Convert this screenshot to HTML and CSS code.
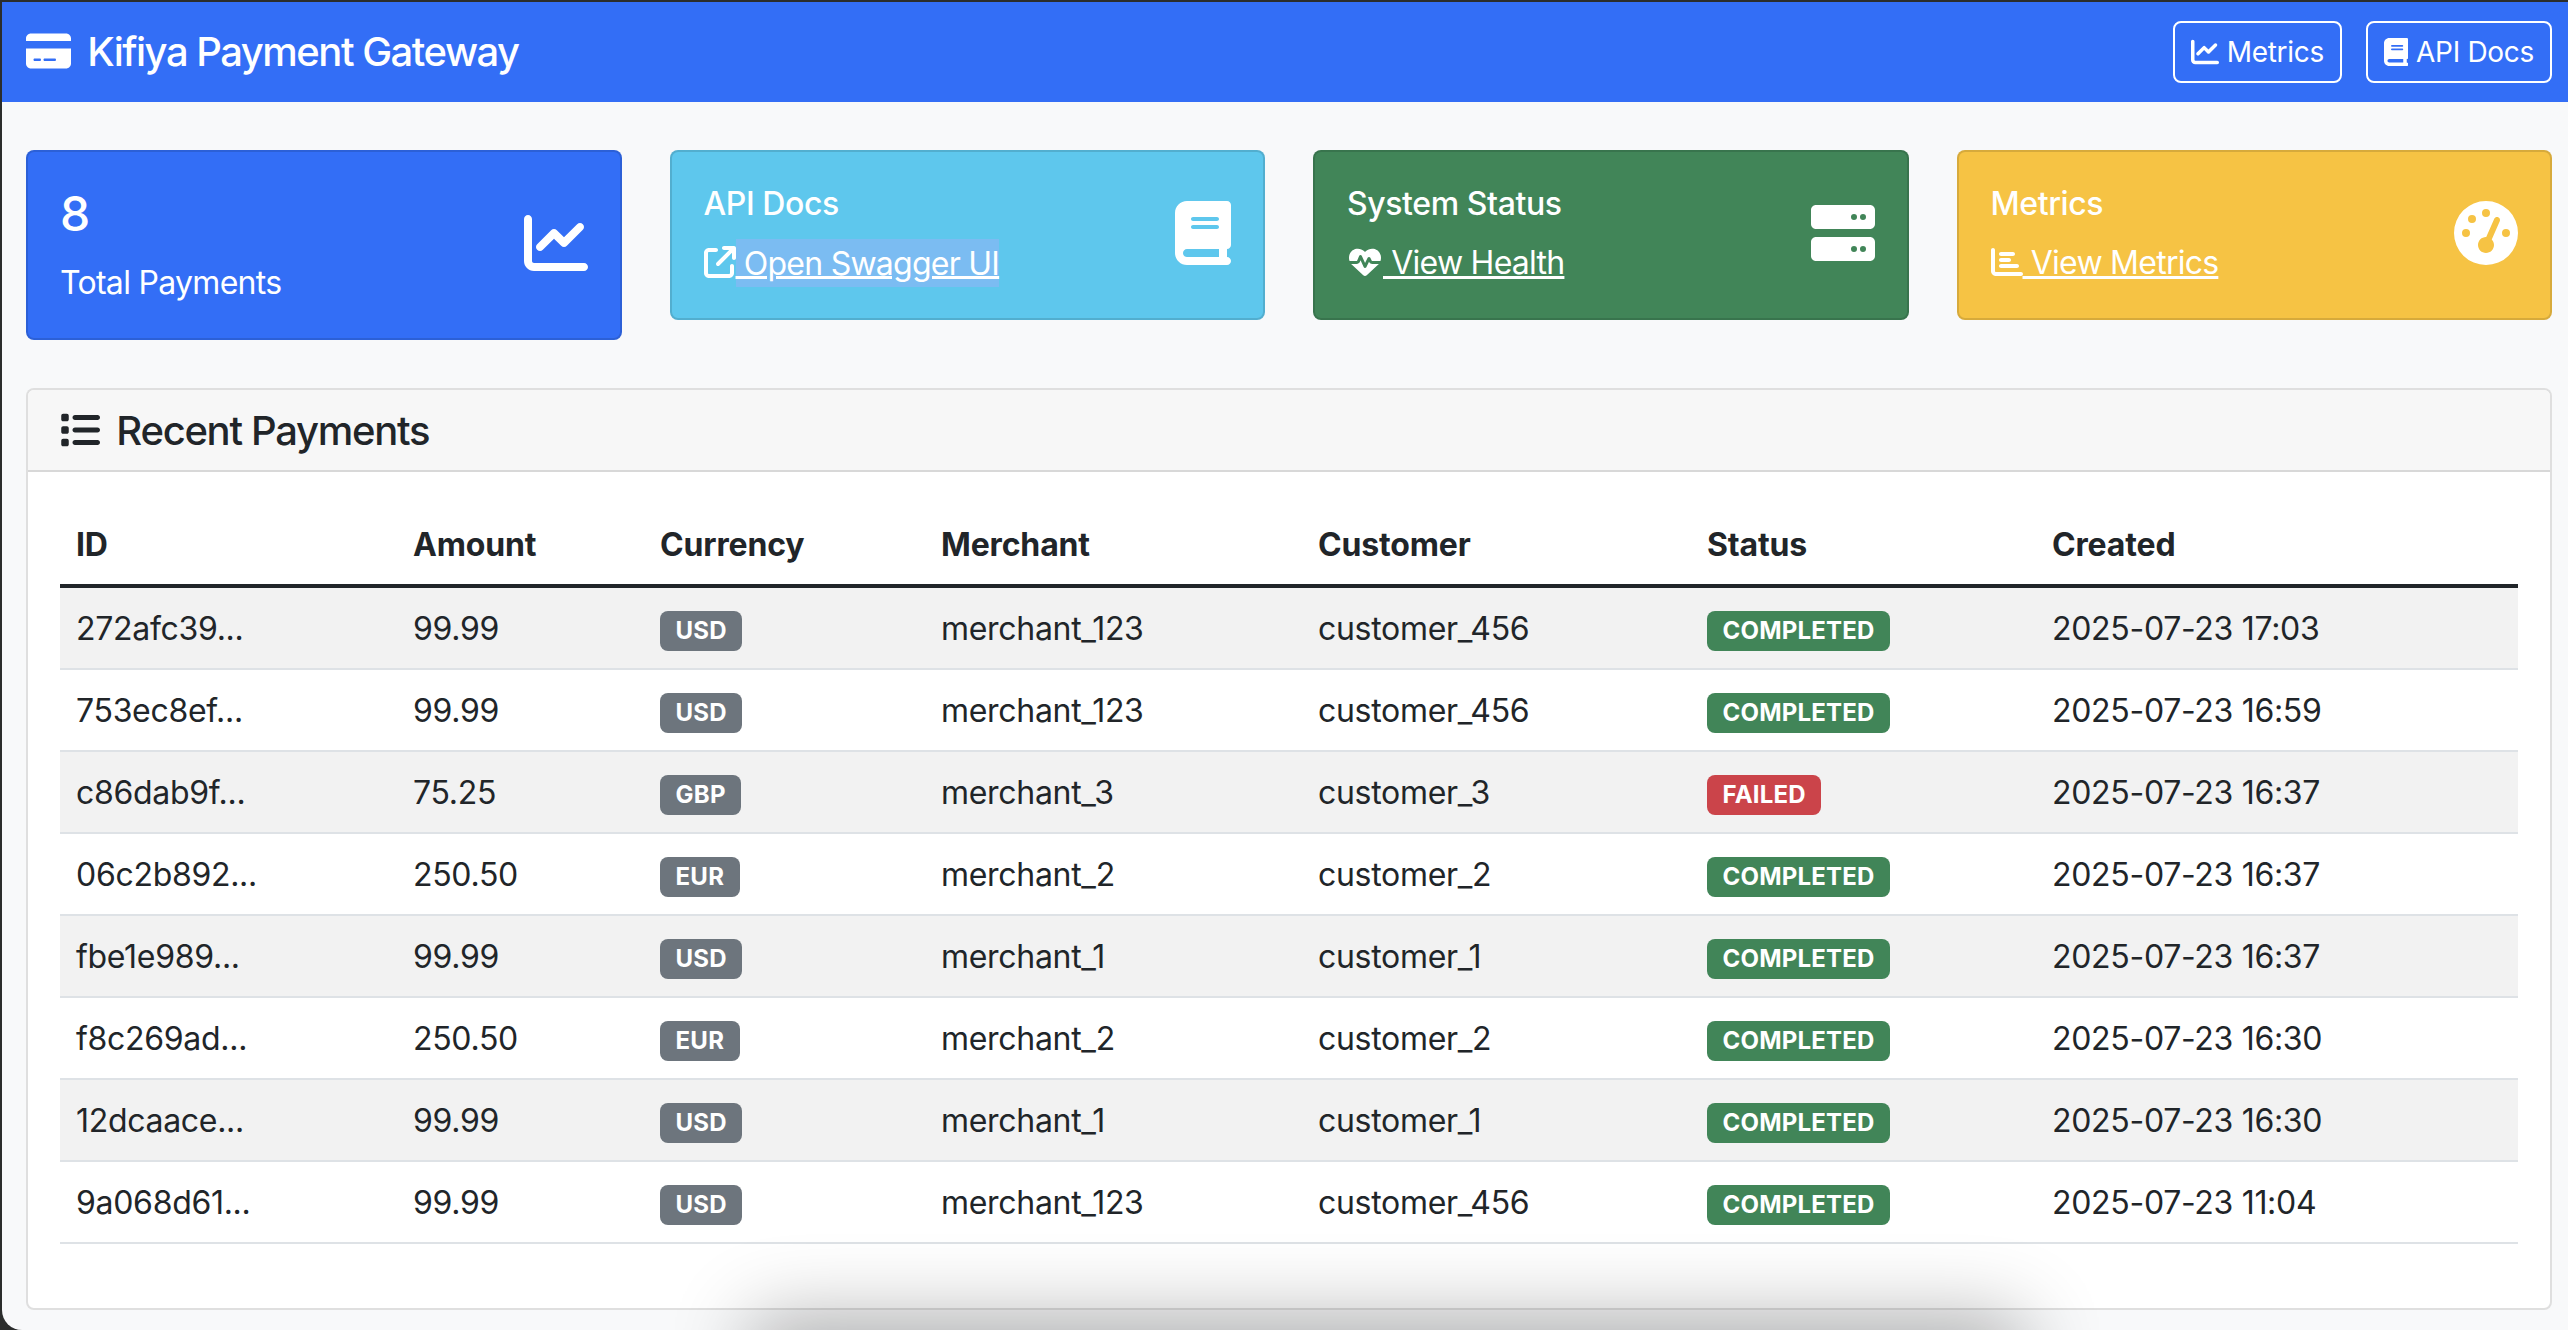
FILE: index.html
```html
<!DOCTYPE html>
<html lang="en">

<head>
	<meta charset="UTF-8">
	<title>Kifiya Payment Gateway</title>
	<link rel="stylesheet" href="styles.css">
</head>

<body>
	<div class="window">
		<nav class="navbar">
			<a class="brand" href="#">
				<svg class="icon icon-title" viewBox="0 0 576 512"><path d="M64 32C28.7 32 0 60.7 0 96v32H576V96c0-35.3-28.7-64-64-64H64zM576 224H0V416c0 35.3 28.7 64 64 64H512c35.3 0 64-28.7 64-64V224zM112 352h64c8.8 0 16 7.2 16 16s-7.2 16-16 16H112c-8.8 0-16-7.2-16-16s7.2-16 16-16zm112 16c0-8.8 7.2-16 16-16H368c8.8 0 16 7.2 16 16s-7.2 16-16 16H240c-8.8 0-16-7.2-16-16z"/></svg>
				Kifiya Payment Gateway
			</a>
			<div class="nav-buttons">
				<a class="btn" href="#">
					<svg class="icon" viewBox="0 0 512 512"><path d="M64 64c0-17.7-14.3-32-32-32S0 46.3 0 64V400c0 44.2 35.8 80 80 80H480c17.7 0 32-14.3 32-32s-14.3-32-32-32H80c-8.8 0-16-7.2-16-16V64zm406.6 86.6c12.5-12.5 12.5-32.8 0-45.3s-32.8-12.5-45.3 0L320 210.7l-57.4-57.4c-12.5-12.5-32.8-12.5-45.3 0l-112 112c-12.5 12.5-12.5 32.8 0 45.3s32.8 12.5 45.3 0L240 221.3l57.4 57.4c12.5 12.5 32.8 12.5 45.3 0l128-128z"/></svg>
					Metrics
				</a>
				<a class="btn" href="#">
					<svg class="icon" viewBox="0 0 448 512"><path d="M96 0C43 0 0 43 0 96V416c0 53 43 96 96 96H384h32c17.7 0 32-14.3 32-32s-14.3-32-32-32V384c17.7 0 32-14.3 32-32V32c0-17.7-14.3-32-32-32H384 96zm0 384H352v64H96c-17.7 0-32-14.3-32-32s14.3-32 32-32zm32-240c0-8.8 7.2-16 16-16H336c8.8 0 16 7.2 16 16s-7.2 16-16 16H144c-8.8 0-16-7.2-16-16zm16 48H336c8.8 0 16 7.2 16 16s-7.2 16-16 16H144c-8.8 0-16-7.2-16-16s7.2-16 16-16z"/></svg>
					API Docs
				</a>
			</div>
		</nav>

		<main class="content">
			<!-- summary cards -->
			<section class="summary">
				<div class="tile tile-blue">
					<div class="tile-text">
						<h4 class="tile-count">8</h4>
						<p class="tile-label">Total Payments</p>
					</div>
					<svg class="icon tile-icon" viewBox="0 0 512 512"><path d="M64 64c0-17.7-14.3-32-32-32S0 46.3 0 64V400c0 44.2 35.8 80 80 80H480c17.7 0 32-14.3 32-32s-14.3-32-32-32H80c-8.8 0-16-7.2-16-16V64zm406.6 86.6c12.5-12.5 12.5-32.8 0-45.3s-32.8-12.5-45.3 0L320 210.7l-57.4-57.4c-12.5-12.5-32.8-12.5-45.3 0l-112 112c-12.5 12.5-12.5 32.8 0 45.3s32.8 12.5 45.3 0L240 221.3l57.4 57.4c12.5 12.5 32.8 12.5 45.3 0l128-128z"/></svg>
				</div>

				<div class="tile tile-cyan">
					<div class="tile-text">
						<h6 class="tile-title">API Docs</h6>
						<a class="tile-link" href="#"><svg class="icon" viewBox="0 0 512 512"><path d="M320 0c-17.7 0-32 14.3-32 32s14.3 32 32 32h82.7L201.4 265.4c-12.5 12.5-12.5 32.8 0 45.3s32.8 12.5 45.3 0L448 109.3V192c0 17.7 14.3 32 32 32s32-14.3 32-32V32c0-17.7-14.3-32-32-32H320zM80 32C35.8 32 0 67.8 0 112V432c0 44.2 35.8 80 80 80H400c44.2 0 80-35.8 80-80V320c0-17.7-14.3-32-32-32s-32 14.3-32 32V432c0 8.8-7.2 16-16 16H80c-8.8 0-16-7.2-16-16V112c0-8.8 7.2-16 16-16H192c17.7 0 32-14.3 32-32s-14.3-32-32-32H80z"/></svg><span class="selected"> Open Swagger UI</span></a>
					</div>
					<svg class="icon tile-icon" viewBox="0 0 448 512"><path d="M96 0C43 0 0 43 0 96V416c0 53 43 96 96 96H384h32c17.7 0 32-14.3 32-32s-14.3-32-32-32V384c17.7 0 32-14.3 32-32V32c0-17.7-14.3-32-32-32H384 96zm0 384H352v64H96c-17.7 0-32-14.3-32-32s14.3-32 32-32zm32-240c0-8.8 7.2-16 16-16H336c8.8 0 16 7.2 16 16s-7.2 16-16 16H144c-8.8 0-16-7.2-16-16zm16 48H336c8.8 0 16 7.2 16 16s-7.2 16-16 16H144c-8.8 0-16-7.2-16-16s7.2-16 16-16z"/></svg>
				</div>

				<div class="tile tile-green">
					<div class="tile-text">
						<h6 class="tile-title">System Status</h6>
						<a class="tile-link" href="#"><svg class="icon icon-heart" viewBox="0 0 512 512"><path d="M228.3 469.1L47.6 300.4c-4.2-3.9-8.2-8.1-11.9-12.4h87c22.6 0 43-13.6 51.7-34.5l10.5-25.2 49.3 109.5c3.8 8.5 12.1 14 21.4 14.1s17.8-5 22-13.3L320 253.7l1.7 3.4c9.5 19 28.9 31 50.1 31H476.3c-3.7 4.3-7.7 8.5-11.9 12.4L283.7 469.1c-7.5 7-17.4 10.9-27.7 10.9s-20.2-3.9-27.7-10.9zM503.7 240h-132c-3 0-5.8-1.7-7.2-4.4l-23.2-46.3c-4.1-8.1-12.4-13.3-21.5-13.3s-17.4 5.1-21.5 13.3l-41.4 82.8L205.9 158.2c-3.9-8.7-12.7-14.3-22.2-14.1s-18.1 5.9-21.8 14.8l-31.8 76.3c-1.2 3-4.2 4.9-7.4 4.9H16c-2.6 0-5 .4-7.3 1.1C3 225.2 0 208.2 0 190.9v-5.8c0-69.9 50.5-129.5 119.4-141C165 36.5 211.4 51.4 244 84l12 12 12-12c32.6-32.6 79-47.5 124.6-39.9C461.5 55.6 512 115.2 512 185.1v5.8c0 16.9-2.8 33.5-8.3 49.1z"/></svg> View Health</a>
					</div>
					<svg class="icon tile-icon" viewBox="0 0 512 512"><path fill-rule="evenodd" d="M40 32C18 32 0 50 0 72V184c0 22 18 40 40 40H472c22 0 40-18 40-40V72c0-22-18-40-40-40H40zM344 104a24 24 0 1 1 0 48 24 24 0 1 1 0-48zM416 104a24 24 0 1 1 0 48 24 24 0 1 1 0-48zM40 288C18 288 0 306 0 328V440c0 22 18 40 40 40H472c22 0 40-18 40-40V328c0-22-18-40-40-40H40zM344 360a24 24 0 1 1 0 48 24 24 0 1 1 0-48zM416 360a24 24 0 1 1 0 48 24 24 0 1 1 0-48z"/></svg>
				</div>

				<div class="tile tile-yellow">
					<div class="tile-text">
						<h6 class="tile-title">Metrics</h6>
						<a class="tile-link" href="#"><svg class="icon" viewBox="0 0 512 512"><path d="M32 32c17.7 0 32 14.3 32 32V400c0 8.8 7.2 16 16 16H480c17.7 0 32 14.3 32 32s-14.3 32-32 32H80c-44.2 0-80-35.8-80-80V64C0 46.3 14.3 32 32 32zm96 96c0-17.7 14.3-32 32-32l192 0c17.7 0 32 14.3 32 32s-14.3 32-32 32l-192 0c-17.7 0-32-14.3-32-32zm32 64H288c17.7 0 32 14.3 32 32s-14.3 32-32 32H160c-17.7 0-32-14.3-32-32s14.3-32 32-32zm0 96H416c17.7 0 32 14.3 32 32s-14.3 32-32 32H160c-17.7 0-32-14.3-32-32s14.3-32 32-32z"/></svg> View Metrics</a>
					</div>
					<svg class="icon tile-icon" viewBox="0 0 512 512"><path d="M0 256a256 256 0 1 1 512 0A256 256 0 1 1 0 256zM288 96a32 32 0 1 0 -64 0 32 32 0 1 0 64 0zM256 416c35.3 0 64-28.7 64-64c0-17.4-6.9-33.1-18.1-44.6L366 161.7c5.3-12.1-.2-26.3-12.3-31.6s-26.3 .2-31.6 12.3L257.9 288c-.6 0-1.3 0-1.9 0c-35.3 0-64 28.7-64 64s28.7 64 64 64zM176 144a32 32 0 1 0 -64 0 32 32 0 1 0 64 0zM96 288a32 32 0 1 0 0-64 32 32 0 1 0 0 64zm352-32a32 32 0 1 0 -64 0 32 32 0 1 0 64 0z"/></svg>
				</div>
			</section>

			<!-- payments table -->
			<section class="panel">
				<h5 class="panel-header">
					<svg class="icon icon-title" viewBox="0 0 512 512"><path d="M40 48C26.7 48 16 58.7 16 72v48c0 13.3 10.7 24 24 24H88c13.3 0 24-10.7 24-24V72c0-13.3-10.7-24-24-24H40zM192 64c-17.7 0-32 14.3-32 32s14.3 32 32 32H480c17.7 0 32-14.3 32-32s-14.3-32-32-32H192zm0 160c-17.7 0-32 14.3-32 32s14.3 32 32 32H480c17.7 0 32-14.3 32-32s-14.3-32-32-32H192zm0 160c-17.7 0-32 14.3-32 32s14.3 32 32 32H480c17.7 0 32-14.3 32-32s-14.3-32-32-32H192zM16 232v48c0 13.3 10.7 24 24 24H88c13.3 0 24-10.7 24-24V232c0-13.3-10.7-24-24-24H40c-13.3 0-24 10.7-24 24zM40 368c-13.3 0-24 10.7-24 24v48c0 13.3 10.7 24 24 24H88c13.3 0 24-10.7 24-24V392c0-13.3-10.7-24-24-24H40z"/></svg>
					Recent Payments
				</h5>
				<div class="panel-body">
					<table class="payments">
						<colgroup>
							<col class="col-id">
							<col class="col-amount">
							<col class="col-currency">
							<col class="col-merchant">
							<col class="col-customer">
							<col class="col-status">
							<col class="col-created">
						</colgroup>
						<thead>
							<tr><th>ID</th><th>Amount</th><th>Currency</th><th>Merchant</th><th>Customer</th><th>Status</th><th>Created</th></tr>
						</thead>
						<tbody>
							<tr><td>272afc39...</td><td>99.99</td><td><span class="badge badge-grey">USD</span></td><td>merchant_123</td><td>customer_456</td><td><span class="badge badge-green">COMPLETED</span></td><td>2025-07-23 17:03</td></tr>
							<tr><td>753ec8ef...</td><td>99.99</td><td><span class="badge badge-grey">USD</span></td><td>merchant_123</td><td>customer_456</td><td><span class="badge badge-green">COMPLETED</span></td><td>2025-07-23 16:59</td></tr>
							<tr><td>c86dab9f...</td><td>75.25</td><td><span class="badge badge-grey">GBP</span></td><td>merchant_3</td><td>customer_3</td><td><span class="badge badge-red">FAILED</span></td><td>2025-07-23 16:37</td></tr>
							<tr><td>06c2b892...</td><td>250.50</td><td><span class="badge badge-grey">EUR</span></td><td>merchant_2</td><td>customer_2</td><td><span class="badge badge-green">COMPLETED</span></td><td>2025-07-23 16:37</td></tr>
							<tr><td>fbe1e989...</td><td>99.99</td><td><span class="badge badge-grey">USD</span></td><td>merchant_1</td><td>customer_1</td><td><span class="badge badge-green">COMPLETED</span></td><td>2025-07-23 16:37</td></tr>
							<tr><td>f8c269ad...</td><td>250.50</td><td><span class="badge badge-grey">EUR</span></td><td>merchant_2</td><td>customer_2</td><td><span class="badge badge-green">COMPLETED</span></td><td>2025-07-23 16:30</td></tr>
							<tr><td>12dcaace...</td><td>99.99</td><td><span class="badge badge-grey">USD</span></td><td>merchant_1</td><td>customer_1</td><td><span class="badge badge-green">COMPLETED</span></td><td>2025-07-23 16:30</td></tr>
							<tr><td>9a068d61...</td><td>99.99</td><td><span class="badge badge-grey">USD</span></td><td>merchant_123</td><td>customer_456</td><td><span class="badge badge-green">COMPLETED</span></td><td>2025-07-23 11:04</td></tr>
						</tbody>
					</table>
				</div>
			</section>
		</main>

		<!-- shadow of another window lying over the page -->
		<div class="window-shadow"></div>
	</div>
</body>

</html>
```

FILE: styles.css
```css
* {
	box-sizing: border-box;
	margin: 0;
	padding: 0;
}

html, body {
	height: 100%;
	overflow: hidden;
}

body {
	padding: 2px 0 0 2px;

	font-family: Inter, "Noto Sans", sans-serif;
	font-size: 32px;
	line-height: 48px;
	color: #212529;

	background-color: #2b2d2c;
}

a {
	color: inherit;
}

.window {
	position: relative;
	height: 100%;
	overflow: hidden;

	background-color: #f8f9fa;
	border-bottom-left-radius: 20px;
}

.icon {
	display: inline-block;
	height: 1em;
	vertical-align: -0.125em;
	fill: currentColor;
}

.icon-title {
	margin-right: 7px;
}

.icon-heart {
	margin: 0 2px;
}

/* top bar */
.navbar {
	display: flex;
	justify-content: space-between;
	align-items: center;

	height: 100px;
	padding: 0 16px 0 24px;

	color: #fff;
	background-color: #336ef6;
}

.brand {
	font-size: 40px;
	font-weight: 500;
	line-height: 60px;
	letter-spacing: -1.5px;
	text-decoration: none;
}

.nav-buttons {
	display: flex;
	gap: 24px;
}

.btn {
	padding: 8px 16px;

	font-size: 28px;
	line-height: 42px;
	letter-spacing: -0.3px;
	text-decoration: none;

	border: 2px solid #fff;
	border-radius: 8px;
}

/* summary cards */
.content {
	padding: 48px 16px 0 24px;
}

.summary {
	display: grid;
	grid-template-columns: repeat(4, 1fr);
	gap: 48px;
	align-items: start;

	margin-bottom: 48px;
}

.tile {
	display: flex;
	justify-content: space-between;
	align-items: center;

	padding: 32px;

	color: #fff;

	border: 2px solid rgba(0, 0, 0, 0.125);
	border-radius: 8px;
}

.tile-blue   { background-color: #336ef6; }
.tile-cyan   { background-color: #5ec7ed; }
.tile-green  { background-color: #418558; }
.tile-yellow { background-color: #f6c344; }

.tile-text {
	padding-top: 1px;
	margin-bottom: -1px;
}

.tile-count {
	margin-bottom: 16px;

	font-size: 48px;
	font-weight: 500;
	line-height: 58px;
}

.tile-title {
	margin-bottom: 16px;

	font-size: 32px;
	font-weight: 500;
	line-height: 38px;
	letter-spacing: -0.4px;
}

.tile-label {
	line-height: 48px;
	letter-spacing: -0.7px;
}

.tile-link {
	display: block;
	letter-spacing: -0.75px;
}

.tile-icon {
	margin-bottom: 4px;
	font-size: 64px;
}

.selected {
	padding: 4.5px 0;
	background-color: #7bbcf2;
}

/* payments panel */
.panel {
	background-color: #fff;
	border: 2px solid rgba(0, 0, 0, 0.125);
	border-radius: 8px;
}

.panel-header {
	padding: 17px 32px 15px;

	font-size: 40px;
	font-weight: 500;
	line-height: 48px;
	letter-spacing: -1.3px;

	background-color: #f7f7f7;
	border-bottom: 2px solid rgba(0, 0, 0, 0.125);
	border-radius: 6px 6px 0 0;
}

.panel-body {
	padding: 32px;
}

.payments {
	width: 2458px;
	margin-bottom: 32px;

	border-collapse: collapse;
	table-layout: fixed;
}

.col-id       { width: 337px; }
.col-amount   { width: 247px; }
.col-currency { width: 281px; }
.col-merchant { width: 377px; }
.col-customer { width: 389px; }
.col-status   { width: 345px; }
.col-created  { width: 482px; }

.payments th {
	padding: 17px 16px 15px;

	font-weight: 700;
	letter-spacing: -0.15px;
	text-align: left;

	border-bottom: 4px solid #212529;
}

.payments td {
	padding: 17px 16px 15px;

	letter-spacing: -0.3px;

	border-bottom: 2px solid #dee2e6;
}

.payments tbody tr:nth-child(odd) {
	background-color: #f2f2f2;
}

.badge {
	display: inline-block;
	padding: 8.4px 15.6px;

	font-size: 24px;
	font-weight: 700;
	line-height: 24px;
	letter-spacing: 0.2px;
	color: #fff;
	white-space: nowrap;
	vertical-align: 1px;

	border-radius: 8px;
}

.badge-grey  { background-color: #6d757d; }
.badge-green { background-color: #418558; }
.badge-red   { background-color: #cb444a; }

.window-shadow {
	position: absolute;
	left: 780px;
	top: 1345px;

	width: 1210px;
	height: 60px;

	box-shadow: 0 0 80px 30px rgba(0, 0, 0, 0.3);
	pointer-events: none;
}
```
